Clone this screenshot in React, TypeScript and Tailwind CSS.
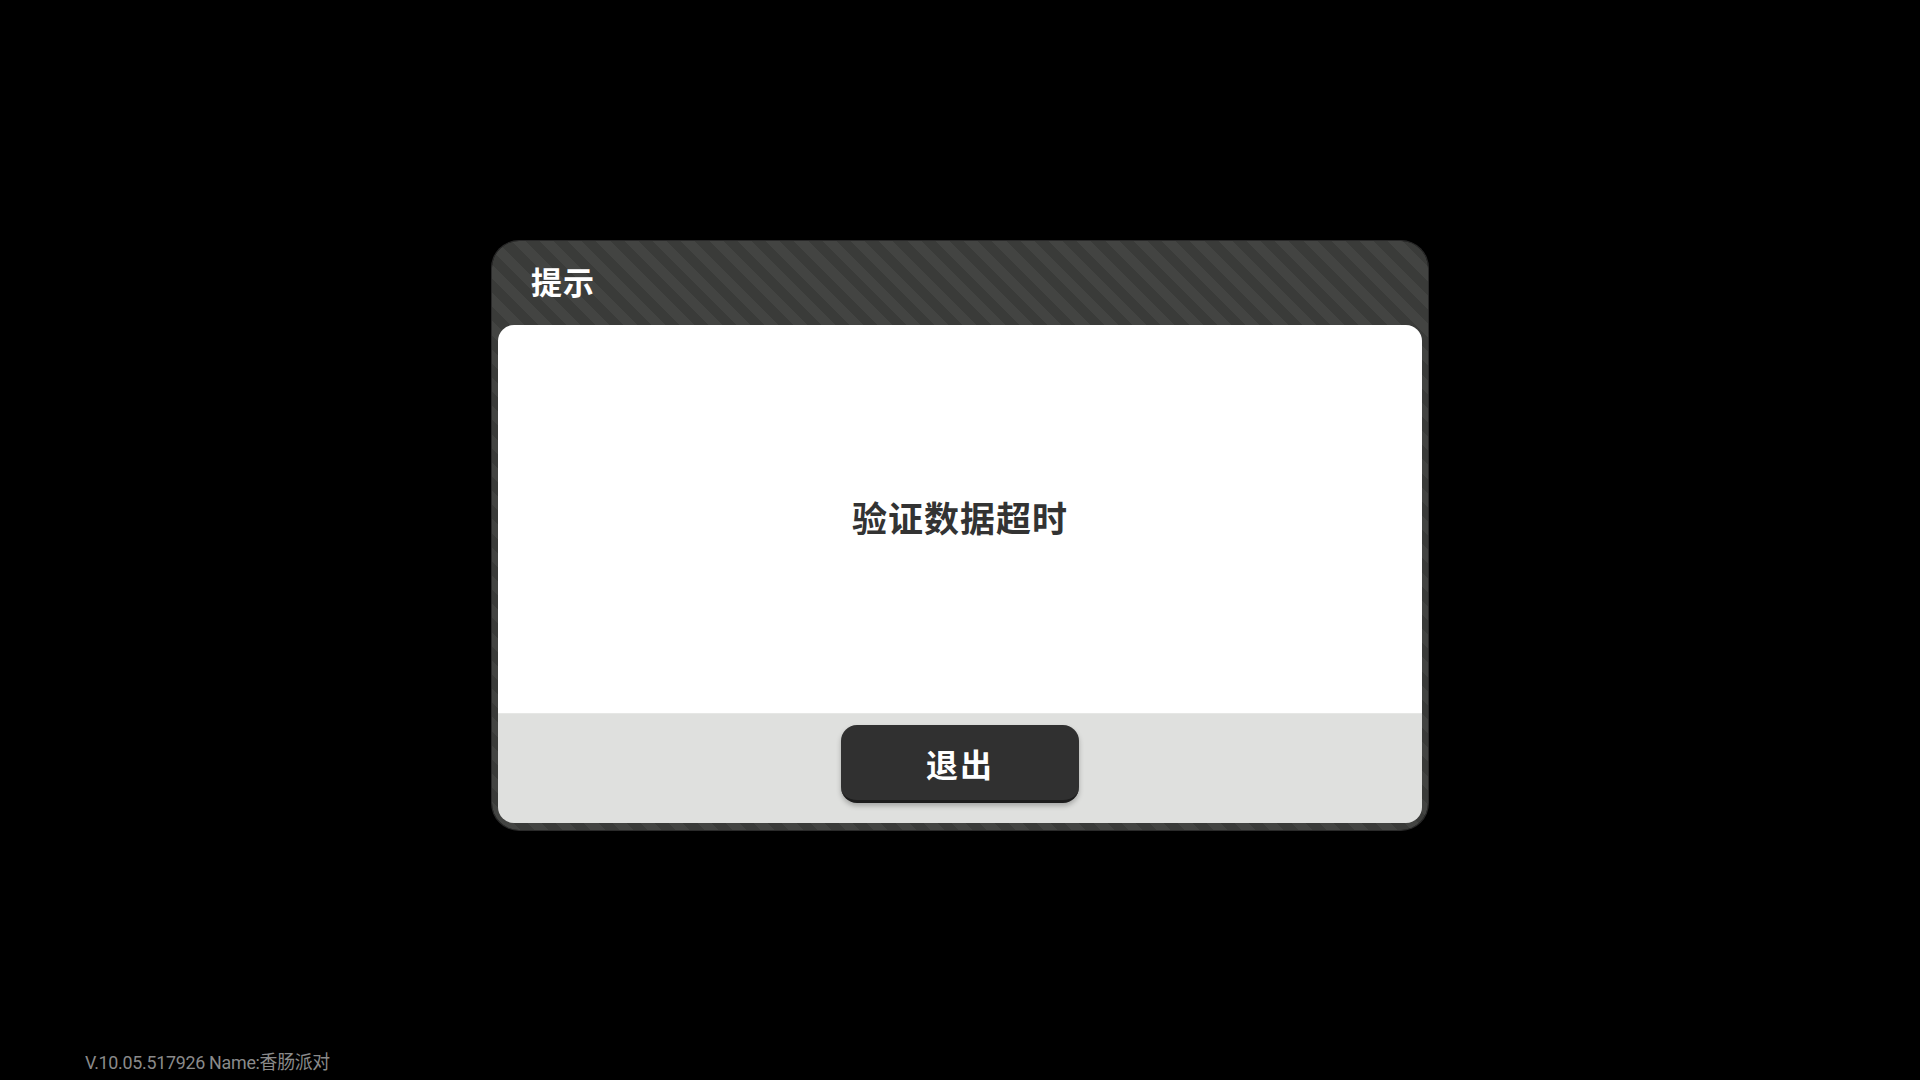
import React from 'react';

const cjk = "font-['Noto_Sans_CJK_SC','Noto_Sans',sans-serif]";

export default function App() {
  return (
    <div className={`relative w-[1920px] h-[1080px] bg-black overflow-hidden ${cjk}`}>
      <div className="flex h-full items-start justify-center pt-[241px]">
        {/* Dialog */}
        <div className="w-[936px] rounded-[27px] px-[6px] pb-[7px] bg-[repeating-linear-gradient(45deg,#3a3b39_0px,#3a3b39_10px,#434442_10px,#434442_20px)] shadow-[0_0_0_1px_#2a2a2a]">
          <div className="h-[84px] flex items-center pl-[33px] pb-[5px]">
            <span className="text-[31px] font-bold text-white tracking-[1px] leading-none">提示</span>
          </div>
          <div className="rounded-[16px] overflow-hidden">
            <div className="h-[388px] bg-white flex items-center justify-center pb-[6px]">
              <span className="text-[35px] font-bold text-[#333333] tracking-[1px] leading-none">验证数据超时</span>
            </div>
            <div className="h-[110px] bg-[#dfe0de] border-t border-[#e6e7e5] flex justify-center pt-[11px]">
              <button className="w-[238px] h-[78px] rounded-[16px] bg-[#303030] border-b-[3px] border-[#1c1c1c] shadow-[0_3px_5px_rgba(0,0,0,0.25)] flex items-center justify-center">
                <span className="text-[32px] font-bold text-white tracking-[2px] leading-none">退出</span>
              </button>
            </div>
          </div>
        </div>
      </div>

      {/* Version label */}
      <div className="absolute left-[85px] top-[1053px] text-[19px] leading-none text-[#8a8a8a] font-['Roboto','Noto_Sans_CJK_SC',sans-serif] tracking-[-0.3px] scale-x-[0.94] origin-left whitespace-nowrap">
        V.10.05.517926 Name:香肠派对
      </div>
    </div>
  );
}
